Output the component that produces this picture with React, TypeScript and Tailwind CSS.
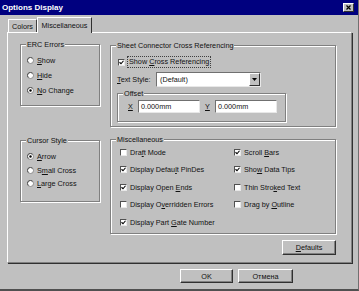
import React from "react";

const GRAY = "bg-[#c0c0c0]";

function U({ t, i }: { t: string; i: number }) {
  return (
    <>
      {t.slice(0, i)}
      <span className="underline underline-offset-[1px]">{t[i]}</span>
      {t.slice(i + 1)}
    </>
  );
}

function Group({
  label,
  className,
  children,
}: {
  label: string;
  className: string;
  children?: React.ReactNode;
}) {
  return (
    <div
      className={
        "border border-[#808080] shadow-[inset_1px_1px_0_#ffffff,1px_1px_0_#ffffff] " +
        className
      }
    >
      <div className="-mt-[5px] ml-[5px] w-fit px-[1px] bg-[#c0c0c0] leading-[9px] h-[9px] whitespace-nowrap">
        {label}
      </div>
      {children}
    </div>
  );
}

function Radio({ on }: { on?: boolean }) {
  return (
    <svg width="7" height="7" viewBox="0 0 14 14" className="shrink-0">
      <circle cx="7" cy="7" r="6" fill="#ffffff" stroke="#7a7a7a" strokeWidth="1.6" />
      <path d="M2.5 11 A6 6 0 0 1 11 2.5" fill="none" stroke="#303030" strokeWidth="1.4" />
      {on && <circle cx="7" cy="7" r="2.4" fill="#000000" />}
    </svg>
  );
}

function Check({ on }: { on?: boolean }) {
  return (
    <div className="w-[7px] h-[7px] shrink-0 bg-white border-t border-l border-[#505050] border-b border-r border-b-[#e8e8e8] border-r-[#e8e8e8] flex items-center justify-center">
      {on && (
        <svg width="5" height="5" viewBox="0 0 10 10">
          <path d="M1 4.5 L4 7.5 L9 1.5" fill="none" stroke="#000" strokeWidth="2.2" />
        </svg>
      )}
    </div>
  );
}

function RadioRow({ label, on, h }: { label: React.ReactNode; on?: boolean; h: string }) {
  return (
    <div className={"flex items-center gap-[3px] " + h}>
      <Radio on={on} />
      <span className="whitespace-nowrap">{label}</span>
    </div>
  );
}

function CheckRow({ label, on }: { label: React.ReactNode; on?: boolean }) {
  return (
    <div className="flex items-center gap-[3px] h-[17.5px]">
      <Check on={on} />
      <span className="whitespace-nowrap">{label}</span>
    </div>
  );
}

function Btn({ children, w, h }: { children: React.ReactNode; w: string; h: string }) {
  return (
    <div
      className={
        "flex items-center justify-center bg-[#c0c0c0] border-t border-l border-white border-b border-r border-b-[#303030] border-r-[#303030] shadow-[inset_-1px_-1px_0_#808080] " +
        w +
        " " +
        h
      }
    >
      {children}
    </div>
  );
}

function Field({ w, text }: { w: string; text: string }) {
  return (
    <div
      className={
        "h-[13px] bg-white border-t border-l border-[#707070] border-b border-r border-b-[#e8e8e8] border-r-[#e8e8e8] flex items-center pl-[2px] " +
        w
      }
    >
      {text}
    </div>
  );
}

export default function App() {
  return (
    <div
      className={
        "w-[359px] h-[291px] overflow-hidden text-[7.25px] leading-[9px] text-[#111] [font-family:'Liberation_Sans',Arial,sans-serif] border-r border-[#707070] border-b-2 border-b-[#505050] flex flex-col " +
        GRAY
      }
    >
      {/* Title bar */}
      <div className="h-[15px] shrink-0 bg-[#00007f] flex items-center justify-between pl-[2px] pr-[4px]">
        <span className="text-white font-bold text-[8px] leading-[10px]">Options Display</span>
        <div className="w-[11px] h-[9px] bg-[#c0c0c0] border-t border-l border-white border-b border-r border-b-[#303030] border-r-[#303030] flex items-center justify-center">
          <svg width="5" height="5" viewBox="0 0 10 10">
            <path d="M1 1 L9 9 M9 1 L1 9" stroke="#000" strokeWidth="2.4" />
          </svg>
        </div>
      </div>

      {/* Tabs */}
      <div className="flex items-end ml-[8px] mt-[2px] h-[15px] shrink-0">
        <div className="h-[13px] w-[29px] border-t border-l border-white border-r border-r-[#404040] rounded-t-[1px] flex items-center justify-center">
          Colors
        </div>
        <div className="h-[16px] -mb-[1px] w-[55px] border-t border-l border-white border-r border-r-[#303030] bg-[#c0c0c0] relative z-10 flex items-start justify-center pt-[3px]">
          Miscellaneous
        </div>
      </div>

      {/* Panel */}
      <div className="ml-[7px] w-[345px] h-[231px] shrink-0 border-t border-l border-white border-r border-b border-r-[#808080] border-b-[#808080] shadow-[1px_1px_0_#303030] flex">
        {/* Left column */}
        <div className="ml-[12px] mt-[11px] w-[80px] flex flex-col">
          <Group label="ERC Errors" className="h-[62px]">
            <div className="mt-[4px] pl-[6px]">
              <RadioRow h="h-[15px]" label={<U t="Show" i={0} />} />
              <RadioRow h="h-[15px]" label={<U t="Hide" i={0} />} />
              <RadioRow h="h-[15px]" on label={<U t="No Change" i={0} />} />
            </div>
          </Group>
          <Group label="Cursor Style" className="h-[62px] mt-[34px]">
            <div className="mt-[5px] pl-[6px]">
              <RadioRow h="h-[13.5px]" on label={<U t="Arrow" i={0} />} />
              <RadioRow h="h-[13.5px]" label={<U t="Small Cross" i={1} />} />
              <RadioRow h="h-[13.5px]" label={<U t="Large Cross" i={0} />} />
            </div>
          </Group>
        </div>

        {/* Right column */}
        <div className="ml-[10px] mt-[12px] w-[226px] flex flex-col">
          <Group label="Sheet Connector Cross Referencing" className="h-[82px]">
            <div className="pl-[7px] mt-[5px] flex items-center gap-[2px] h-[14px]">
              <Check on />
              <span className="whitespace-nowrap border border-dotted border-[#404040] px-[1px] leading-[10px]">
                Show <U t="Cross Referencing" i={0} />
              </span>
            </div>
            <div className="pl-[6px] mt-[3px] flex items-center h-[15px]">
              <span className="w-[39px] whitespace-nowrap">
                <U t="Text Style:" i={0} />
              </span>
              <div className="w-[105px] h-[15px] bg-white border-t border-l border-[#707070] border-b border-r border-b-[#e8e8e8] border-r-[#e8e8e8] flex items-center justify-between pl-[3px]">
                <span>(Default)</span>
                <div className="w-[11px] h-[13px] bg-[#c0c0c0] border-t border-l border-white border-b border-r border-b-[#303030] border-r-[#303030] flex items-center justify-center">
                  <svg width="5" height="3" viewBox="0 0 10 6">
                    <path d="M0 0 L10 0 L5 6 Z" fill="#000" />
                  </svg>
                </div>
              </div>
            </div>
            <Group label="Offset" className="ml-[6px] mt-[6px] w-[169px] h-[29px]">
              <div className="mt-[2px] pl-[10px] flex items-center h-[13px]">
                <span className="w-[10px]">
                  <U t="X" i={0} />
                </span>
                <Field w="w-[62px]" text="0.000mm" />
                <span className="ml-[5px] w-[10px]">
                  <U t="Y" i={0} />
                </span>
                <Field w="w-[62px]" text="0.000mm" />
              </div>
            </Group>
          </Group>

          <Group label="Miscellaneous" className="h-[95px] mt-[12px]">
            <div className="-mt-[0.75px] pl-[9px] grid grid-cols-[114px_1fr]">
              <CheckRow label={<>Dra<U t="ft Mode" i={0} /></>} />
              <CheckRow on label={<>Scroll <U t="Bars" i={0} /></>} />
              <CheckRow on label={<>Display Defau<U t="lt PinDes" i={0} /></>} />
              <CheckRow on label={<>Sho<U t="w Data Tips" i={0} /></>} />
              <CheckRow on label={<>Display Open <U t="Ends" i={0} /></>} />
              <CheckRow label={<>Thin Stro<U t="ked Text" i={0} /></>} />
              <CheckRow label={<>Display O<U t="verridden Errors" i={0} /></>} />
              <CheckRow label={<>Drag by <U t="Outline" i={0} /></>} />
              <CheckRow on label={<>Display Part <U t="Gate Number" i={0} /></>} />
            </div>
          </Group>

          <div className="mt-[6px] self-end">
            <Btn w="w-[54px]" h="h-[15px]">
              <U t="Defaults" i={0} />
            </Btn>
          </div>
        </div>
      </div>

      {/* Bottom buttons */}
      <div className="flex ml-[180px] mt-[6px] gap-[5px]">
        <Btn w="w-[53px]" h="h-[14px]">OK</Btn>
        <Btn w="w-[55px]" h="h-[14px]">Отмена</Btn>
      </div>
    </div>
  );
}
